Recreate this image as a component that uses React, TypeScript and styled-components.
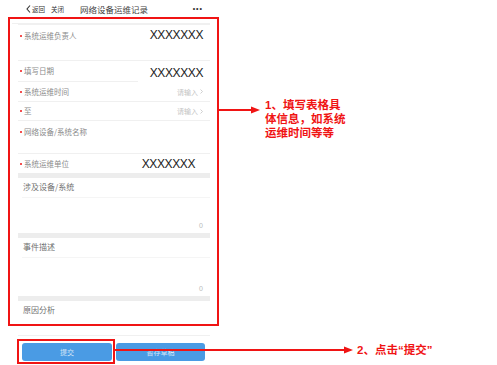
import React from "react";
import styled, { createGlobalStyle } from "styled-components";

const GlobalStyle = createGlobalStyle`
  body {
    margin: 0;
    background: #fff;
    font-family: "Noto Sans CJK SC", "Noto Sans", sans-serif;
  }
`;

const RED = "#f01414";

const Page = styled.div`
  position: relative;
  width: 497px;
  height: 365px;
  overflow: hidden;
`;

const Phone = styled.div`
  width: 228px;
  display: flex;
  flex-direction: column;
`;

const NavBar = styled.div`
  height: 16px;
  display: flex;
  align-items: center;
  padding: 1px 25px 0 26px;
  color: #333;
`;

const NavLink = styled.span`
  font-size: 6.5px;
  line-height: 10px;
  margin-right: 6px;
  display: flex;
  align-items: center;
  gap: 1px;
`;

const NavTitle = styled.span`
  font-size: 8.5px;
  line-height: 12px;
  margin-left: 10px;
  color: #444;
`;

const NavMore = styled.span`
  margin-left: auto;
  font-family: "Liberation Sans", Arial, sans-serif;
  font-size: 7px;
  line-height: 10px;
  letter-spacing: 1px;
  font-weight: bold;
  color: #333;
`;

const Highlight = styled.div`
  margin-left: 8px;
  width: 211px;
  height: 309px;
  box-sizing: border-box;
  border: 2px solid ${RED};
  padding: 4px 7px 0 8px;
`;

const TopRule = styled.div`
  margin-left: -6px;
  height: 1px;
  background: #f0f0f0;
`;

const Row = styled.div<{ $h: number; $top?: boolean; $short?: boolean; $vr?: number }>`
  position: relative;
  height: ${(p) => p.$h}px;
  display: flex;
  align-items: ${(p) => (p.$top ? "flex-start" : "center")};
  padding: ${(p) => (p.$top ? "5px" : "0")} ${(p) => p.$vr ?? 7}px 0 0;
  box-sizing: border-box;
  border-top: 1px solid ${(p) => (p.$short ? "transparent" : "#f0f0f0")};
  background-image: ${(p) =>
    p.$short ? "linear-gradient(#f0f0f0, #f0f0f0)" : "none"};
  background-size: 120px 1px;
  background-repeat: no-repeat;
  background-position: 0 -1px;
`;

const Label = styled.span`
  font-size: 7.5px;
  line-height: 12px;
  color: #8a8a8a;
  padding-left: 6px;
  position: relative;
  &::before {
    content: "";
    position: absolute;
    left: 2px;
    top: 5px;
    width: 2px;
    height: 2px;
    border-radius: 50%;
    background: ${RED};
  }
`;

const Value = styled.span<{ $up?: number }>`
  margin-left: auto;
  font-family: "Liberation Sans", Arial, sans-serif;
  font-size: 12px;
  line-height: 12px;
  color: #222;
  letter-spacing: -0.4px;
  margin-top: ${(p) => p.$up ?? 0}px;
`;

const Placeholder = styled.span`
  margin-left: auto;
  font-size: 7px;
  color: #c4c4c4;
  display: flex;
  align-items: center;
  gap: 2px;
`;

const Band = styled.div`
  height: 5px;
  background: #ededed;
`;

const Area = styled.div<{ $h: number }>`
  height: ${(p) => p.$h}px;
  display: flex;
  flex-direction: column;
  box-sizing: border-box;
  padding-top: 3px;
`;

const AreaLabel = styled.span`
  font-size: 8px;
  line-height: 12px;
  color: #6f6f6f;
  padding-left: 5px;
`;

const AreaRule = styled.div`
  margin: 4px 0 0 4px;
  height: 1px;
  background: #f5f5f5;
`;

const Counter = styled.span`
  margin-top: auto;
  margin-bottom: 3px;
  align-self: flex-end;
  margin-right: 7px;
  font-family: "Liberation Sans", Arial, sans-serif;
  font-size: 7px;
  line-height: 8px;
  color: #bbb;
`;

const Footer = styled.div`
  display: flex;
  flex-direction: column;
  padding-left: 17px;
`;

const FooterRule = styled.div`
  margin: 9px 0 3px 1px;
  width: 192px;
  height: 1px;
  background: #f0f0f0;
`;

const ButtonRow = styled.div`
  display: flex;
  align-items: center;
  gap: 1px;
`;

const ButtonFrame = styled.div`
  width: 98px;
  height: 25px;
  box-sizing: border-box;
  border: 2px solid ${RED};
  display: flex;
  align-items: center;
  padding: 1px 0 0 3px;
`;

const Button = styled.div<{ $w: number }>`
  width: ${(p) => p.$w}px;
  height: 18px;
  border-radius: 3px;
  background: #4a9be4;
  color: #d5e6f7;
  font-size: 7px;
  display: flex;
  align-items: center;
  justify-content: center;
`;

const Callout = styled.div`
  position: absolute;
  color: ${RED};
  font-family: "Liberation Sans", "Noto Sans CJK SC", sans-serif;
  font-size: 11.5px;
  font-weight: bold;
  white-space: nowrap;
  display: flex;
  flex-direction: column;
`;

const CalloutLine = styled.span`
  height: 14px;
  line-height: 14px;
`;

const ArrowSvg = styled.svg`
  position: absolute;
`;

const Chevron = () => (
  <svg width="5" height="8" viewBox="0 0 5 8">
    <path d="M4 0.5L1 4L4 7.5" stroke="#333" strokeWidth="1.1" fill="none" />
  </svg>
);

const SmallChevron = () => (
  <svg width="3" height="5" viewBox="0 0 3 5">
    <path d="M0.5 0.5L2.5 2.5L0.5 4.5" stroke="#c4c4c4" strokeWidth="0.8" fill="none" />
  </svg>
);

const Arrow = ({ left, top, length }: { left: number; top: number; length: number }) => (
  <ArrowSvg style={{ left, top }} width={length} height={10} viewBox={`0 0 ${length} 10`}>
    <line x1="0" y1="5" x2={length - 7} y2="5" stroke={RED} strokeWidth="2" />
    <polygon points={`${length - 9},1.5 ${length},5 ${length - 9},8.5`} fill={RED} />
  </ArrowSvg>
);

export default function App() {
  return (
    <Page>
      <GlobalStyle />
      <Phone>
        <NavBar>
          <NavLink>
            <Chevron />
            返回
          </NavLink>
          <NavLink>关闭</NavLink>
          <NavTitle>网络设备运维记录</NavTitle>
          <NavMore>•••</NavMore>
        </NavBar>
        <Highlight>
          <TopRule />
          <Row $h={36} $top>
            <Label>系统运维负责人</Label>
            <Value $up={-1}>XXXXXXX</Value>
          </Row>
          <Row $h={21}>
            <Label>填写日期</Label>
            <Value $up={3}>XXXXXXX</Value>
          </Row>
          <Row $h={20} $short>
            <Label>系统运维时间</Label>
            <Placeholder>
              请输入 <SmallChevron />
            </Placeholder>
          </Row>
          <Row $h={19}>
            <Label>至</Label>
            <Placeholder>
              请输入 <SmallChevron />
            </Placeholder>
          </Row>
          <Row $h={33} $top>
            <Label>网络设备/系统名称</Label>
          </Row>
          <Row $h={20} $vr={15}>
            <Label>系统运维单位</Label>
            <Value>XXXXXXX</Value>
          </Row>
          <Band />
          <Area $h={55}>
            <AreaLabel>涉及设备/系统</AreaLabel>
            <AreaRule />
            <Counter>0</Counter>
          </Area>
          <Band />
          <Area $h={58}>
            <AreaLabel>事件描述</AreaLabel>
            <AreaRule />
            <Counter>0</Counter>
          </Area>
          <Band />
          <Area $h={24}>
            <AreaLabel>原因分析</AreaLabel>
          </Area>
        </Highlight>
        <Footer>
          <FooterRule />
          <ButtonRow>
            <ButtonFrame>
              <Button $w={90}>提交</Button>
            </ButtonFrame>
            <Button $w={89}>暂存草稿</Button>
          </ButtonRow>
        </Footer>
      </Phone>

      <Arrow left={219} top={105} length={41} />
      <Callout style={{ left: 265, top: 98 }}>
        <CalloutLine>1、填写表格具</CalloutLine>
        <CalloutLine>体信息，如系统</CalloutLine>
        <CalloutLine>运维时间等等</CalloutLine>
      </Callout>

      <Arrow left={115} top={345} length={238} />
      <Callout style={{ left: 357, top: 343 }}>
        <CalloutLine>2、点击“提交”</CalloutLine>
      </Callout>
    </Page>
  );
}
